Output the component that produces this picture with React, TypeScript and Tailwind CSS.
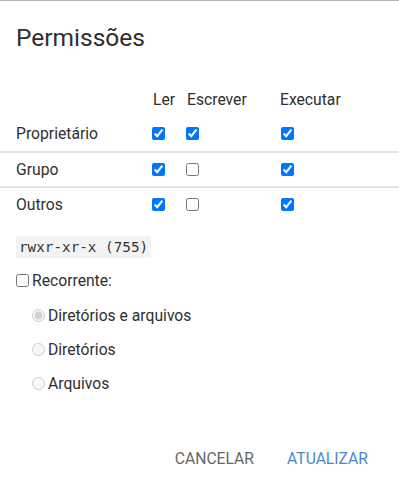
import { type ReactNode } from 'react'

type Perm = { name: string; read: boolean; write: boolean; exec: boolean }

const rows: Perm[] = [
    { name: 'Proprietário', read: true, write: true, exec: true },
    { name: 'Grupo', read: true, write: false, exec: true },
    { name: 'Outros', read: true, write: false, exec: true },
]

const Check = ({ checked }: { checked: boolean }) => (
    <input type="checkbox" defaultChecked={checked} className="m-0 h-[13px] w-[13px]" />
)

const Radio = ({ label, checked }: { label: string; checked?: boolean }) => (
    <label className="flex h-[34px] items-center pl-8">
        <input type="radio" name="rec" disabled defaultChecked={checked} className="m-0 h-[13px] w-[13px]" />
        <span className="ml-[3px]">{label}</span>
    </label>
)

const Cells = ({ children }: { children: ReactNode }) => (
    <div className="grid grid-cols-[152px_34px_94px_1fr] items-center">{children}</div>
)

export default function App() {
    return (
        <div className="h-[494px] w-[399px] border-t border-[#b5b5b5] bg-white font-['Roboto',sans-serif] text-[15.7px] text-[#2f2f2f]">
            <h1 className="mt-[23px] pl-4 text-[24.5px] leading-[28px] text-[#2f2f2f]">Permissões</h1>

            {/* tabela de permissões */}
            <div className="mt-[32px]">
                <div className="h-[32px]">
                    <Cells>
                        <span />
                        <span className="h-[32px] leading-[32px] pl-px">Ler</span>
                        <span className="h-[32px] leading-[32px] pl-px">Escrever</span>
                        <span className="h-[32px] leading-[32px]">Executar</span>
                    </Cells>
                </div>
                {rows.map((r, i) => (
                    <div key={r.name} className={i > 0 ? 'border-t-2 border-[#e3e3e3]' : ''}>
                        <div className={i === 0 ? 'h-[35px]' : 'h-[33px]'}>
                            <Cells>
                                <span className={(i === 0 ? 'h-[35px] leading-[35px]' : 'h-[33px] leading-[33px]') + ' pl-4'}>{r.name}</span>
                                <span className="flex"><Check checked={r.read} /></span>
                                <span className="flex"><Check checked={r.write} /></span>
                                <span className="flex pl-px"><Check checked={r.exec} /></span>
                            </Cells>
                        </div>
                    </div>
                ))}
            </div>

            <div className="mt-[14px] pl-4">
                <code className="inline-block h-[22px] bg-[#f3f3f3] px-[3px] font-['DejaVu_Sans_Mono',monospace] text-[14.3px] leading-[22px] text-[#333]">
                    rwxr-xr-x (755)
                </code>
            </div>

            <label className="mt-[13px] flex h-[18px] items-center pl-4">
                <input type="checkbox" className="m-0 h-[13px] w-[13px]" />
                <span className="ml-[3px]">Recorrente:</span>
            </label>

            <div className="mt-[9px] flex flex-col">
                <Radio label="Diretórios e arquivos" checked />
                <Radio label="Diretórios" />
                <Radio label="Arquivos" />
            </div>

            <div className="mt-[38px] flex justify-end gap-[17px] pr-[23px]">
                <button className="px-2 py-2 uppercase text-[#666]">Cancelar</button>
                <button className="px-2 py-2 uppercase text-[#4a87d6]">Atualizar</button>
            </div>
        </div>
    )
}
